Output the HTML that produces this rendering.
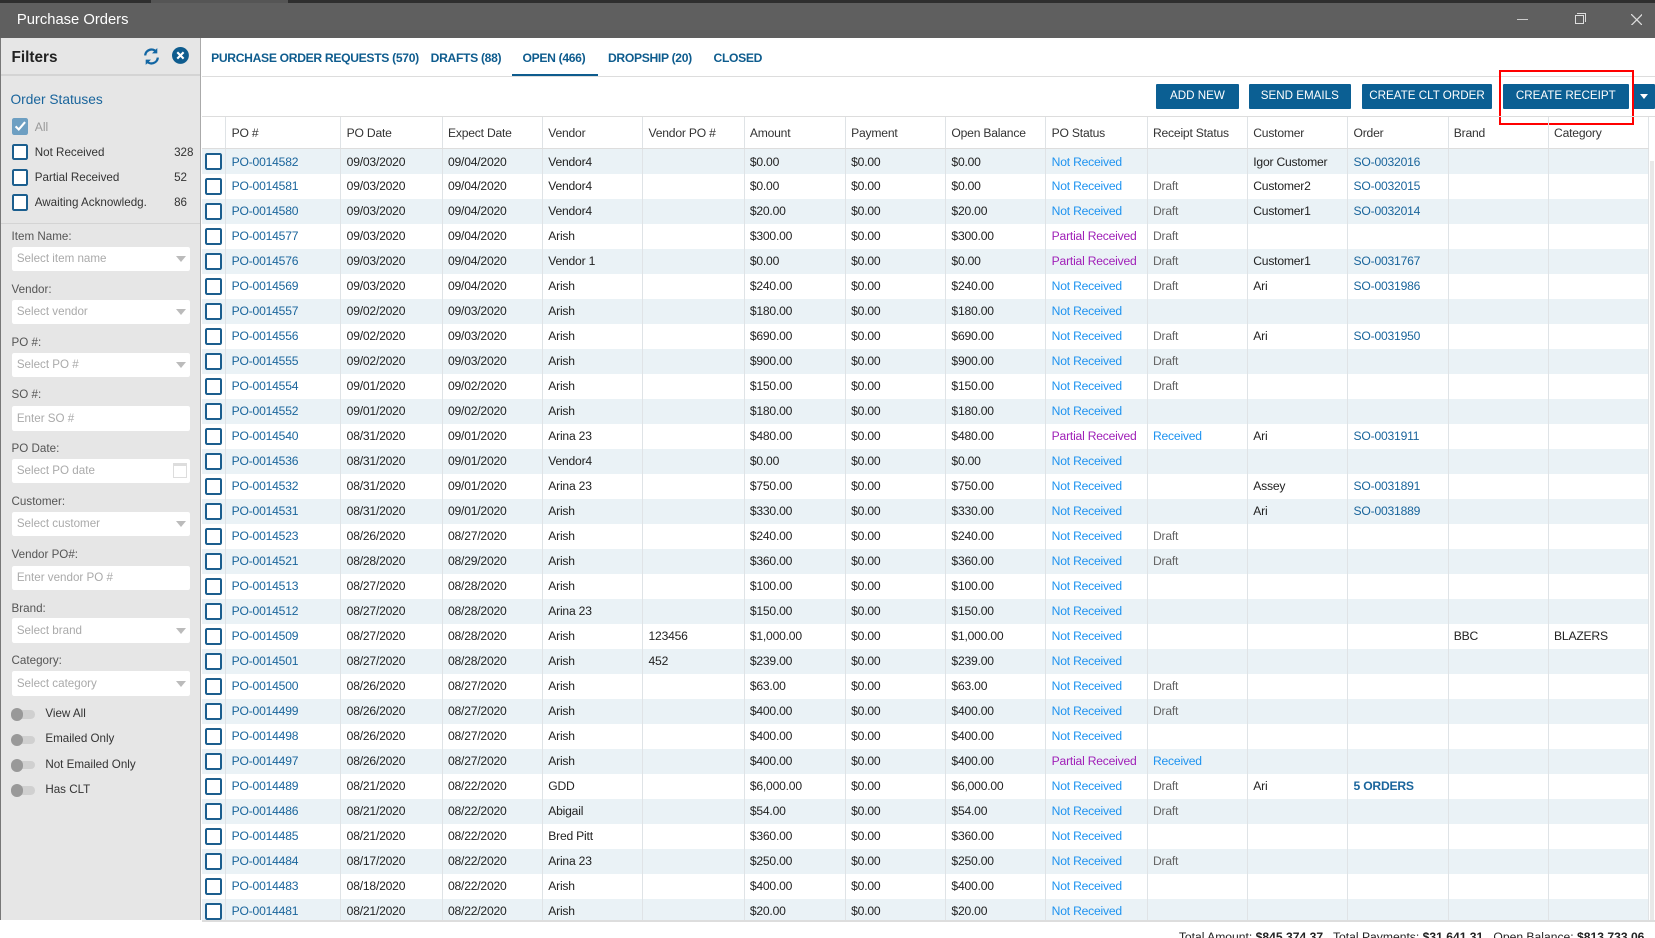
<!DOCTYPE html>
<html><head><meta charset="utf-8"><style>
*{box-sizing:border-box;margin:0;padding:0}
html,body{width:1655px;height:938px;overflow:hidden;background:#fff}
#root{zoom:1.05548;width:1568px;height:889px;position:relative;font-family:"Liberation Sans",sans-serif;font-size:11.5px;color:#222;overflow:hidden}
.abs{position:absolute}
#top{left:0;top:0;width:1568px;height:36px;background:#5f5f5f;color:#fff;font-size:14px}
#top .strip{position:absolute;left:0;top:0;width:1568px;height:3px;background:#2e2e2e}
#top .strip2{position:absolute;left:143px;top:0;width:130px;height:3px;background:#555}
#side{left:0;top:36px;width:190px;height:836px;background:#e6e6e6;border-right:1px solid #aaa;border-left:1px solid #777}
.lbl{position:absolute;left:10px;color:#555;font-size:11px}
.inp{position:absolute;left:10px;width:169px;height:23px;background:#fff;border-radius:2px;color:#aaa;font-size:11px;padding:5px 0 0 5px}
.inp .ar{position:absolute;right:4px;top:9px;border-left:5px solid transparent;border-right:5px solid transparent;border-top:6px solid #bbb}
.cb{position:absolute;width:16px;height:16px;border:2px solid #1b5e8e;border-radius:2px;background:#fff}
.tg{position:absolute;left:10px;width:22px;height:8px;border-radius:4px;background:#d0d0d0}
.tg:before{content:"";position:absolute;left:-1px;top:-2px;width:12px;height:12px;border-radius:6px;background:#999}
.tl{position:absolute;left:42px;color:#333;font-size:11px}
#tabs{left:191px;top:36px;width:1377px;height:37px;border-bottom:1px solid #ddd}
.tab{position:absolute;top:12px;color:#0e5c8e;font-weight:bold;font-size:11.5px;letter-spacing:-0.3px;white-space:nowrap}
.btn{position:absolute;top:80px;height:23px;background:#0b5f93;color:#fff;font-size:11px;text-align:center;line-height:23px;border-radius:1px;white-space:nowrap}
#grid{left:191px;top:110px;width:1377px;height:762px;overflow:hidden;border-top:1px solid #ddd}
table{border-collapse:collapse;table-layout:fixed;width:1371px}
td,th{border-right:1px solid #dfe3e6;padding:0 0 0 5px;white-space:nowrap;overflow:hidden;font-weight:normal;text-align:left;letter-spacing:-0.2px}
th{height:30px;border-bottom:1px solid #ddd;color:#333}
tr.r{height:23.7px}
tr.r:nth-child(even){background:#eaf2f6}
td.c{padding:0 0 0 3px;position:relative}
td.c i{display:block;width:16px;height:16px;border:2px solid #1b5e8e;border-radius:2px;background:#fff}
.l{color:#1a659c}.n{color:#1e93f0}.p{color:#a021b8}.d{color:#666}.b{font-weight:bold;color:#1a659c}
#foot{left:191px;top:872px;width:1377px;height:17px;border-top:2px solid #ddd}
</style></head><body><div id="root">
<div id="top" class="abs"><div class="strip"></div><div class="strip2"></div>
<span class="abs" style="left:16px;top:11px">Purchase Orders</span>
<span class="abs" style="left:1437px;top:18px;width:11px;height:1px;background:#ccc"></span>
<span class="abs" style="left:1492px;top:14px;width:9px;height:9px;border:1px solid #ddd"></span>
<span class="abs" style="left:1494px;top:12px;width:9px;height:9px;border-top:1px solid #ddd;border-right:1px solid #ddd"></span>
<svg class="abs" style="left:1545px;top:13px" width="11" height="11" viewBox="0 0 11 11"><path d="M0 0l11 11M11 0L0 11" stroke="#ddd" stroke-width="1.2"/></svg>
</div>
<div id="side" class="abs">
<div class="abs" style="left:0;top:0;width:189px;height:36px;border-bottom:2px solid #d4d4d4"></div>
<span class="abs" style="left:10px;top:10px;font-size:14.5px;font-weight:bold;color:#222">Filters</span>
<svg class="abs" style="left:134px;top:9px" width="18" height="18" viewBox="0 0 18 18"><path d="M3 8a6 6 0 0 1 10.5-3.5M15 10a6 6 0 0 1-10.5 3.5" fill="none" stroke="#1266a3" stroke-width="2.2"/><path d="M14.5 1v5h-5zM3.5 17v-5h5z" fill="#1266a3"/></svg>
<svg class="abs" style="left:162px;top:9px" width="16" height="16" viewBox="0 0 16 16"><circle cx="8" cy="8" r="8" fill="#0e5c8e"/><path d="M5 5l6 6M11 5l-6 6" stroke="#fff" stroke-width="2"/></svg>
<span class="abs" style="left:9px;top:51px;font-size:13px;color:#1a659c">Order Statuses</span>
<div class="cb" style="left:10px;top:76px;background:#6d9fc2;border-color:#6d9fc2"><svg width="12" height="12" viewBox="0 0 12 12" style="position:absolute;left:0;top:0"><path d="M1.5 6l3 3 6-7" fill="none" stroke="#fff" stroke-width="2"/></svg></div>
<span class="abs" style="left:32px;top:78px;color:#999;font-size:11.5px">All</span>
<div class="cb" style="left:10px;top:100px"></div><span class="tl" style="left:32px;top:102px">Not Received</span><span class="tl" style="left:164px;top:102px">328</span>
<div class="cb" style="left:10px;top:124px"></div><span class="tl" style="left:32px;top:126px">Partial Received</span><span class="tl" style="left:164px;top:126px">52</span>
<div class="cb" style="left:10px;top:148px"></div><span class="tl" style="left:32px;top:150px">Awaiting Acknowledg.</span><span class="tl" style="left:164px;top:150px">86</span>
<div class="abs" style="left:0;top:175px;width:189px;height:1px;background:#d4d4d4"></div>
<span class="lbl" style="top:182px">Item Name:</span><div class="inp" style="top:198px">Select item name<i class="ar"></i></div>
<span class="lbl" style="top:232px">Vendor:</span><div class="inp" style="top:248px">Select vendor<i class="ar"></i></div>
<span class="lbl" style="top:282px">PO #:</span><div class="inp" style="top:298px">Select PO #<i class="ar"></i></div>
<span class="lbl" style="top:332px">SO #:</span><div class="inp" style="top:349px">Enter SO #</div>
<span class="lbl" style="top:383px">PO Date:</span><div class="inp" style="top:399px">Select PO date<span style="position:absolute;right:3px;top:4px;width:13px;height:14px;border:1px solid #ddd;border-top:3px solid #ddd"></span></div>
<span class="lbl" style="top:433px">Customer:</span><div class="inp" style="top:449px">Select customer<i class="ar"></i></div>
<span class="lbl" style="top:483px">Vendor PO#:</span><div class="inp" style="top:500px">Enter vendor PO #</div>
<span class="lbl" style="top:534px">Brand:</span><div class="inp" style="top:550px">Select brand<i class="ar"></i></div>
<span class="lbl" style="top:584px">Category:</span><div class="inp" style="top:600px">Select category<i class="ar"></i></div>
<div class="tg" style="top:637px"></div><span class="tl" style="top:634px">View All</span>
<div class="tg" style="top:661px"></div><span class="tl" style="top:658px">Emailed Only</span>
<div class="tg" style="top:685px"></div><span class="tl" style="top:682px">Not Emailed Only</span>
<div class="tg" style="top:709px"></div><span class="tl" style="top:706px">Has CLT</span>
</div>
<div id="tabs" class="abs">
<span class="tab" style="left:9px">PURCHASE ORDER REQUESTS (570)</span>
<span class="tab" style="left:217px">DRAFTS (88)</span>
<span class="tab" style="left:304px">OPEN (466)</span>
<span class="abs" style="left:294px;top:34px;width:82px;height:2px;background:#0e5c8e"></span>
<span class="tab" style="left:385px">DROPSHIP (20)</span>
<span class="tab" style="left:485px">CLOSED</span>
</div>
<div class="btn" style="left:1095px;width:79px">ADD NEW</div>
<div class="btn" style="left:1183px;width:97px">SEND EMAILS</div>
<div class="btn" style="left:1290px;width:124px">CREATE CLT ORDER</div>
<div class="btn" style="left:1424px;width:119px">CREATE RECEIPT</div>
<div class="btn" style="left:1547px;width:21px"><span style="display:inline-block;border-left:4px solid transparent;border-right:4px solid transparent;border-top:5px solid #fff;vertical-align:middle"></span></div>
<div class="abs" style="left:1420px;top:66px;width:128px;height:52px;border:2px solid #f00"></div>
<div id="grid" class="abs"><table>
<colgroup><col style="width:23px"><col style="width:109px"><col style="width:96px"><col style="width:95px"><col style="width:95px"><col style="width:96px"><col style="width:96px"><col style="width:95px"><col style="width:95px"><col style="width:96px"><col style="width:95px"><col style="width:95px"><col style="width:95px"><col style="width:95px"><col style="width:95px"></colgroup>
<tr><th></th><th>PO #</th><th>PO Date</th><th>Expect Date</th><th>Vendor</th><th>Vendor PO #</th><th>Amount</th><th>Payment</th><th>Open Balance</th><th>PO Status</th><th>Receipt Status</th><th>Customer</th><th>Order</th><th>Brand</th><th>Category</th></tr>
<tr class="r"><td class="c"><i></i></td><td class="l">PO-0014582</td><td>09/03/2020</td><td>09/04/2020</td><td>Vendor4</td><td></td><td>$0.00</td><td>$0.00</td><td>$0.00</td><td class="n">Not Received</td><td></td><td>Igor Customer</td><td class="l">SO-0032016</td><td></td><td></td></tr>
<tr class="r"><td class="c"><i></i></td><td class="l">PO-0014581</td><td>09/03/2020</td><td>09/04/2020</td><td>Vendor4</td><td></td><td>$0.00</td><td>$0.00</td><td>$0.00</td><td class="n">Not Received</td><td class="d">Draft</td><td>Customer2</td><td class="l">SO-0032015</td><td></td><td></td></tr>
<tr class="r"><td class="c"><i></i></td><td class="l">PO-0014580</td><td>09/03/2020</td><td>09/04/2020</td><td>Vendor4</td><td></td><td>$20.00</td><td>$0.00</td><td>$20.00</td><td class="n">Not Received</td><td class="d">Draft</td><td>Customer1</td><td class="l">SO-0032014</td><td></td><td></td></tr>
<tr class="r"><td class="c"><i></i></td><td class="l">PO-0014577</td><td>09/03/2020</td><td>09/04/2020</td><td>Arish</td><td></td><td>$300.00</td><td>$0.00</td><td>$300.00</td><td class="p">Partial Received</td><td class="d">Draft</td><td></td><td></td><td></td><td></td></tr>
<tr class="r"><td class="c"><i></i></td><td class="l">PO-0014576</td><td>09/03/2020</td><td>09/04/2020</td><td>Vendor 1</td><td></td><td>$0.00</td><td>$0.00</td><td>$0.00</td><td class="p">Partial Received</td><td class="d">Draft</td><td>Customer1</td><td class="l">SO-0031767</td><td></td><td></td></tr>
<tr class="r"><td class="c"><i></i></td><td class="l">PO-0014569</td><td>09/03/2020</td><td>09/04/2020</td><td>Arish</td><td></td><td>$240.00</td><td>$0.00</td><td>$240.00</td><td class="n">Not Received</td><td class="d">Draft</td><td>Ari</td><td class="l">SO-0031986</td><td></td><td></td></tr>
<tr class="r"><td class="c"><i></i></td><td class="l">PO-0014557</td><td>09/02/2020</td><td>09/03/2020</td><td>Arish</td><td></td><td>$180.00</td><td>$0.00</td><td>$180.00</td><td class="n">Not Received</td><td></td><td></td><td></td><td></td><td></td></tr>
<tr class="r"><td class="c"><i></i></td><td class="l">PO-0014556</td><td>09/02/2020</td><td>09/03/2020</td><td>Arish</td><td></td><td>$690.00</td><td>$0.00</td><td>$690.00</td><td class="n">Not Received</td><td class="d">Draft</td><td>Ari</td><td class="l">SO-0031950</td><td></td><td></td></tr>
<tr class="r"><td class="c"><i></i></td><td class="l">PO-0014555</td><td>09/02/2020</td><td>09/03/2020</td><td>Arish</td><td></td><td>$900.00</td><td>$0.00</td><td>$900.00</td><td class="n">Not Received</td><td class="d">Draft</td><td></td><td></td><td></td><td></td></tr>
<tr class="r"><td class="c"><i></i></td><td class="l">PO-0014554</td><td>09/01/2020</td><td>09/02/2020</td><td>Arish</td><td></td><td>$150.00</td><td>$0.00</td><td>$150.00</td><td class="n">Not Received</td><td class="d">Draft</td><td></td><td></td><td></td><td></td></tr>
<tr class="r"><td class="c"><i></i></td><td class="l">PO-0014552</td><td>09/01/2020</td><td>09/02/2020</td><td>Arish</td><td></td><td>$180.00</td><td>$0.00</td><td>$180.00</td><td class="n">Not Received</td><td></td><td></td><td></td><td></td><td></td></tr>
<tr class="r"><td class="c"><i></i></td><td class="l">PO-0014540</td><td>08/31/2020</td><td>09/01/2020</td><td>Arina 23</td><td></td><td>$480.00</td><td>$0.00</td><td>$480.00</td><td class="p">Partial Received</td><td class="n">Received</td><td>Ari</td><td class="l">SO-0031911</td><td></td><td></td></tr>
<tr class="r"><td class="c"><i></i></td><td class="l">PO-0014536</td><td>08/31/2020</td><td>09/01/2020</td><td>Vendor4</td><td></td><td>$0.00</td><td>$0.00</td><td>$0.00</td><td class="n">Not Received</td><td></td><td></td><td></td><td></td><td></td></tr>
<tr class="r"><td class="c"><i></i></td><td class="l">PO-0014532</td><td>08/31/2020</td><td>09/01/2020</td><td>Arina 23</td><td></td><td>$750.00</td><td>$0.00</td><td>$750.00</td><td class="n">Not Received</td><td></td><td>Assey</td><td class="l">SO-0031891</td><td></td><td></td></tr>
<tr class="r"><td class="c"><i></i></td><td class="l">PO-0014531</td><td>08/31/2020</td><td>09/01/2020</td><td>Arish</td><td></td><td>$330.00</td><td>$0.00</td><td>$330.00</td><td class="n">Not Received</td><td></td><td>Ari</td><td class="l">SO-0031889</td><td></td><td></td></tr>
<tr class="r"><td class="c"><i></i></td><td class="l">PO-0014523</td><td>08/26/2020</td><td>08/27/2020</td><td>Arish</td><td></td><td>$240.00</td><td>$0.00</td><td>$240.00</td><td class="n">Not Received</td><td class="d">Draft</td><td></td><td></td><td></td><td></td></tr>
<tr class="r"><td class="c"><i></i></td><td class="l">PO-0014521</td><td>08/28/2020</td><td>08/29/2020</td><td>Arish</td><td></td><td>$360.00</td><td>$0.00</td><td>$360.00</td><td class="n">Not Received</td><td class="d">Draft</td><td></td><td></td><td></td><td></td></tr>
<tr class="r"><td class="c"><i></i></td><td class="l">PO-0014513</td><td>08/27/2020</td><td>08/28/2020</td><td>Arish</td><td></td><td>$100.00</td><td>$0.00</td><td>$100.00</td><td class="n">Not Received</td><td></td><td></td><td></td><td></td><td></td></tr>
<tr class="r"><td class="c"><i></i></td><td class="l">PO-0014512</td><td>08/27/2020</td><td>08/28/2020</td><td>Arina 23</td><td></td><td>$150.00</td><td>$0.00</td><td>$150.00</td><td class="n">Not Received</td><td></td><td></td><td></td><td></td><td></td></tr>
<tr class="r"><td class="c"><i></i></td><td class="l">PO-0014509</td><td>08/27/2020</td><td>08/28/2020</td><td>Arish</td><td>123456</td><td>$1,000.00</td><td>$0.00</td><td>$1,000.00</td><td class="n">Not Received</td><td></td><td></td><td></td><td>BBC</td><td>BLAZERS</td></tr>
<tr class="r"><td class="c"><i></i></td><td class="l">PO-0014501</td><td>08/27/2020</td><td>08/28/2020</td><td>Arish</td><td>452</td><td>$239.00</td><td>$0.00</td><td>$239.00</td><td class="n">Not Received</td><td></td><td></td><td></td><td></td><td></td></tr>
<tr class="r"><td class="c"><i></i></td><td class="l">PO-0014500</td><td>08/26/2020</td><td>08/27/2020</td><td>Arish</td><td></td><td>$63.00</td><td>$0.00</td><td>$63.00</td><td class="n">Not Received</td><td class="d">Draft</td><td></td><td></td><td></td><td></td></tr>
<tr class="r"><td class="c"><i></i></td><td class="l">PO-0014499</td><td>08/26/2020</td><td>08/27/2020</td><td>Arish</td><td></td><td>$400.00</td><td>$0.00</td><td>$400.00</td><td class="n">Not Received</td><td class="d">Draft</td><td></td><td></td><td></td><td></td></tr>
<tr class="r"><td class="c"><i></i></td><td class="l">PO-0014498</td><td>08/26/2020</td><td>08/27/2020</td><td>Arish</td><td></td><td>$400.00</td><td>$0.00</td><td>$400.00</td><td class="n">Not Received</td><td></td><td></td><td></td><td></td><td></td></tr>
<tr class="r"><td class="c"><i></i></td><td class="l">PO-0014497</td><td>08/26/2020</td><td>08/27/2020</td><td>Arish</td><td></td><td>$400.00</td><td>$0.00</td><td>$400.00</td><td class="p">Partial Received</td><td class="n">Received</td><td></td><td></td><td></td><td></td></tr>
<tr class="r"><td class="c"><i></i></td><td class="l">PO-0014489</td><td>08/21/2020</td><td>08/22/2020</td><td>GDD</td><td></td><td>$6,000.00</td><td>$0.00</td><td>$6,000.00</td><td class="n">Not Received</td><td class="d">Draft</td><td>Ari</td><td class="b">5 ORDERS</td><td></td><td></td></tr>
<tr class="r"><td class="c"><i></i></td><td class="l">PO-0014486</td><td>08/21/2020</td><td>08/22/2020</td><td>Abigail</td><td></td><td>$54.00</td><td>$0.00</td><td>$54.00</td><td class="n">Not Received</td><td class="d">Draft</td><td></td><td></td><td></td><td></td></tr>
<tr class="r"><td class="c"><i></i></td><td class="l">PO-0014485</td><td>08/21/2020</td><td>08/22/2020</td><td>Bred Pitt</td><td></td><td>$360.00</td><td>$0.00</td><td>$360.00</td><td class="n">Not Received</td><td></td><td></td><td></td><td></td><td></td></tr>
<tr class="r"><td class="c"><i></i></td><td class="l">PO-0014484</td><td>08/17/2020</td><td>08/22/2020</td><td>Arina 23</td><td></td><td>$250.00</td><td>$0.00</td><td>$250.00</td><td class="n">Not Received</td><td class="d">Draft</td><td></td><td></td><td></td><td></td></tr>
<tr class="r"><td class="c"><i></i></td><td class="l">PO-0014483</td><td>08/18/2020</td><td>08/22/2020</td><td>Arish</td><td></td><td>$400.00</td><td>$0.00</td><td>$400.00</td><td class="n">Not Received</td><td></td><td></td><td></td><td></td><td></td></tr>
<tr class="r"><td class="c"><i></i></td><td class="l">PO-0014481</td><td>08/21/2020</td><td>08/22/2020</td><td>Arish</td><td></td><td>$20.00</td><td>$0.00</td><td>$20.00</td><td class="n">Not Received</td><td></td><td></td><td></td><td></td><td></td></tr>
</table>
<div class="abs" style="left:1372px;top:42px;width:4px;height:720px;background:#e8e8e8"></div>
</div>
<div id="foot" class="abs"><span class="abs" style="right:10px;top:7px;white-space:nowrap;font-size:11.5px">Total Amount: <b>$845,374.37</b> &nbsp; Total Payments: <b>$31,641.31</b> &nbsp; Open Balance: <b>$813,733.06</b></span></div>
</div></body></html>
